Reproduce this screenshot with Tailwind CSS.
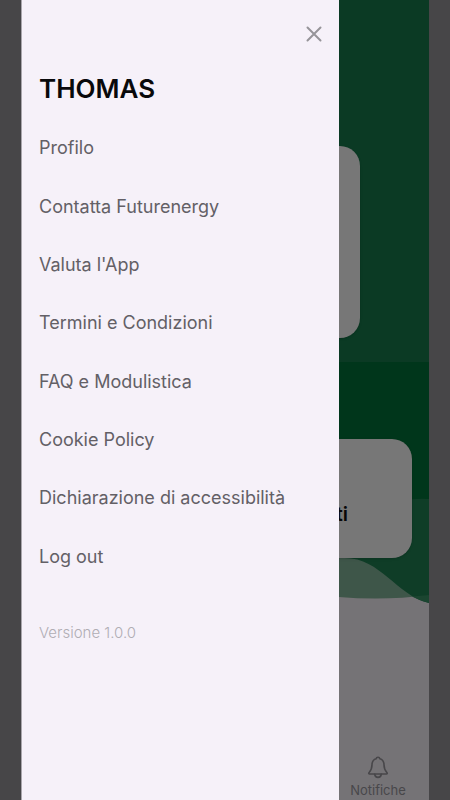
<!DOCTYPE html>
<html lang="it">
<head>
<meta charset="utf-8">
<meta name="viewport" content="width=device-width, initial-scale=1">
<title>Menu</title>
<script src="https://cdn.jsdelivr.net/npm/@tailwindcss/browser@4"></script>
</head>
<body class="bg-[#474648] font-['Inter','Roboto',sans-serif]">
<div class="relative mx-[21px] flex min-h-screen flex-col overflow-hidden bg-[#757376]">
  <main class="flex grow flex-col">
    <section class="bg-[#0b3a24] px-[69px] pt-[146px] pb-6">
      <div class="h-48 rounded-[20px] bg-[#777777] shadow-sm"></div>
    </section>
    <section class="grid bg-[#757376]">
      <svg class="col-start-1 row-start-1 h-[241px] w-full" viewBox="0 0 407 241" preserveAspectRatio="none" aria-hidden="true">
        <path fill="#3e5649" d="M0 190H407V233Q363 239 317 235L0 233Z"/>
        <path fill="#0f3d27" d="M0 0H407V241C374 233 359 196 323 196H0Z"/>
        <path fill="#1b4530" d="M407 233V241Q398 239 390 234.500Z"/>
        <path fill="#00361b" d="M0 0H407V137Q394 136 376 139L0 180Z"/>
      </svg>
      <div class="col-start-1 row-start-1 mx-[17px] mt-[77px] flex h-[119px] items-center justify-end rounded-[20px] bg-[#777777] px-16 pt-[30px] text-xl font-semibold text-[#080808] shadow-sm">ti</div>
    </section>
  </main>
  <nav class="flex justify-end pb-0.5" aria-label="Principale">
    <a href="#notifiche" class="flex w-1/4 flex-col items-center gap-[3px] text-[13px] leading-4 text-[#48474a]">
      <svg class="size-6" viewBox="0 0 24 24" fill="none" stroke="currentColor" stroke-width="1.600" stroke-linejoin="round" stroke-linecap="round" aria-hidden="true">
        <path d="M12 2.200C11 2.200 10.300 2.800 10.200 3.700C7.300 4.500 6 6.800 6 9.800C6 14 5 15.600 3 17.700C2.500 18.300 2.800 19 3.500 19H20.500C21.200 19 21.500 18.300 21 17.700C19 15.600 18 14 18 9.800C18 6.800 16.700 4.500 13.800 3.700C13.700 2.800 13 2.200 12 2.200Z"/>
        <path d="M8.700 19.200C8.900 21.200 10.200 22.400 12 22.400S15.100 21.200 15.300 19.200"/>
      </svg>
      Notifiche
    </a>
  </nav>
  <aside class="absolute inset-y-0 left-0 w-[78%] border-l border-[#a9a6ac] bg-[#f6f1f9]">
    <div class="flex justify-end px-3 pt-[21px]">
      <button type="button" aria-label="Chiudi" class="text-[#969499]">
        <svg class="size-[26px]" viewBox="0 0 26 26" fill="none" stroke="currentColor" stroke-width="2" stroke-linecap="round" aria-hidden="true"><path d="M6.500 6.500L19.500 19.500M19.500 6.500L6.500 19.500"/></svg>
      </button>
    </div>
    <div class="px-[17px] pt-[26px]">
      <h1 class="text-[26px] leading-8 font-semibold text-[#09090b]">THOMAS</h1>
      <ul class="mt-[14px] grid min-h-[467px] auto-rows-fr items-center text-lg whitespace-nowrap text-[#636066]">
        <li><a href="#profilo" class="block">Profilo</a></li>
        <li><a href="#contatta" class="block">Contatta Futurenergy</a></li>
        <li><a href="#valuta" class="block">Valuta l'App</a></li>
        <li><a href="#termini" class="block">Termini e Condizioni</a></li>
        <li><a href="#faq" class="block">FAQ e Modulistica</a></li>
        <li><a href="#cookie" class="block">Cookie Policy</a></li>
        <li><a href="#accessibilita" class="block">Dichiarazione di accessibilità</a></li>
        <li><a href="#logout" class="block">Log out</a></li>
      </ul>
      <p class="pt-[35px] text-[15px] leading-6 font-light text-[#b0adb4]">Versione 1.0.0</p>
    </div>
  </aside>
</div>
</body>
</html>
